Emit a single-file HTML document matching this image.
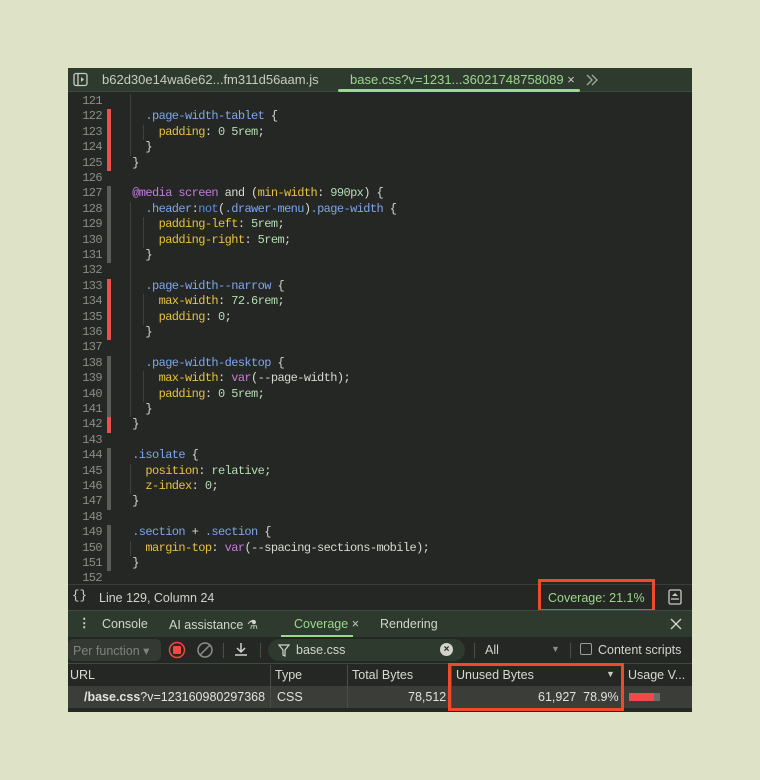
<!DOCTYPE html>
<html><head><meta charset="utf-8"><style>
*{margin:0;padding:0;box-sizing:border-box}
body{width:760px;height:780px;background:#dee3c7;position:relative;overflow:hidden;font-family:"Liberation Sans",sans-serif}
.win{position:absolute;left:68px;top:68px;width:624px;height:644px;background:#242723;overflow:hidden}
.tabs{position:absolute;left:0;top:0;width:624px;height:24px;background:#2e3a2d;border-bottom:1px solid #3d4a3c;font-size:13px;color:#c7ccc2}
.abs{position:absolute;white-space:pre}
.code{position:absolute;left:0;top:25px;width:624px;height:491px;font-family:"Liberation Mono",monospace;font-size:12px;letter-spacing:-0.6px;color:#d6dad2}
.ln{position:absolute;left:0;width:34px;text-align:right;color:#8a8e86;height:15.4px;line-height:15.4px}
.cl{position:absolute;left:51px;height:15.4px;line-height:15.4px;white-space:pre}
.mk{position:absolute;left:39px;width:4px;height:15.4px}
.r{background:#e8524a}.g{background:#5b5e58}
.s{color:#7ea6ec}.p{color:#e7c13f}.v{color:#b5dcb5}.m{color:#c57ae0}.n{color:#5c8ee6}
.guide{position:absolute;width:1px;background:#3e423c}
.status{position:absolute;left:0;top:516px;width:624px;height:26px;border-top:1px solid #3a3e38;font-size:12.5px;color:#d0d4cc}
.dtabs{position:absolute;left:0;top:542px;width:624px;height:27px;background:#2e3a2d;font-size:12.5px;color:#d0d4cc;border-top:1px solid #3d4a3c}
.tool{position:absolute;left:0;top:569px;width:624px;height:27px;background:#242723;font-size:12.5px;color:#d0d4cc;border-bottom:1px solid #3d4a3c}
.th{position:absolute;left:0;top:597px;width:624px;height:21px;background:#242723;font-size:12.5px;color:#d6dad2}
.tr{position:absolute;left:0;top:618px;width:624px;height:22px;background:#3a3d38;font-size:12.5px;color:#e0e4dc}
.col{position:absolute;top:0;bottom:0;width:1px;background:#4a4e47}
.red{position:absolute;border:3px solid #ee4a2b}
</style></head><body>
<div class="win">
 <div class="tabs">
  <svg class="abs" style="left:5px;top:4px" width="15" height="15" viewBox="0 0 15 15"><rect x="1" y="1.5" width="13" height="12" rx="2" fill="none" stroke="#c7ccc2" stroke-width="1.3"/><line x1="5" y1="2" x2="5" y2="13" stroke="#c7ccc2" stroke-width="1.3"/><path d="M8 5l3 2.5-3 2.5z" fill="#c7ccc2"/></svg>
  <div class="abs" style="left:34px;top:4px">b62d30e14wa6e62...fm311d56aam.js</div>
  <div class="abs" style="left:282px;top:4px;color:#9dd68e">base.css?v=1231...36021748758089 <span style="color:#c7ccc2">×</span></div>
  <div class="abs" style="left:270px;top:21px;width:242px;height:3px;background:#9dd68e;border-radius:2px"></div>
  <svg class="abs" style="left:517px;top:6px" width="14" height="12"><path d="M2 1l5 5-5 5M7 1l5 5-5 5" fill="none" stroke="#a0a59b" stroke-width="1.4"/></svg>
 </div>
 <div class="code" id="code"></div>
 <div class="status">
  <div class="abs" style="left:4px;top:4px;font-family:'Liberation Mono',monospace">{}</div>
  <div class="abs" style="left:31px;top:6px">Line 129, Column 24</div>
  <div class="abs" style="left:480px;top:6px;color:#9dd68e">Coverage: 21.1%</div>
  <svg class="abs" style="left:600px;top:4px" width="14" height="16"><rect x="1" y="1" width="12" height="14" rx="1.5" fill="none" stroke="#c7ccc2" stroke-width="1.3"/><path d="M4 7l3-3 3 3z" fill="#c7ccc2"/><line x1="3" y1="10" x2="11" y2="10" stroke="#c7ccc2" stroke-width="1.3"/></svg>
 </div>
 <div class="red" style="left:470px;top:511px;width:117px;height:33px"></div>
 <div class="dtabs">
  <div class="abs" style="left:10px;top:4px;font-weight:bold">⋮</div>
  <div class="abs" style="left:34px;top:6px">Console</div>
  <div class="abs" style="left:101px;top:6px">AI assistance ⚗</div>
  <div class="abs" style="left:226px;top:6px;color:#9dd68e">Coverage <span style="color:#c7ccc2">×</span></div>
  <div class="abs" style="left:213px;top:24px;width:72px;height:2px;background:#9dd68e"></div>
  <div class="abs" style="left:312px;top:6px">Rendering</div>
  <svg class="abs" style="left:602px;top:7px" width="12" height="12"><path d="M1 1l10 10M11 1L1 11" stroke="#d0d4cc" stroke-width="1.4"/></svg>
 </div>
 <div class="tool">
  <div class="abs" style="left:0;top:2px;width:93px;height:22px;background:#353934;border-radius:5px;color:#7f837b;padding:4px 5px">Per function ▾</div>
  <svg class="abs" style="left:100px;top:4px" width="18" height="18"><circle cx="9" cy="9" r="7.5" fill="none" stroke="#ee4a3f" stroke-width="1.5"/><rect x="5" y="5" width="8" height="8" rx="1" fill="#ee4a3f"/></svg>
  <svg class="abs" style="left:128px;top:4px" width="18" height="18"><circle cx="9" cy="9" r="7" fill="none" stroke="#8a8e86" stroke-width="1.5"/><line x1="4" y1="14" x2="14" y2="4" stroke="#8a8e86" stroke-width="1.5"/></svg>
  <div class="abs" style="left:155px;top:6px;width:1px;height:15px;background:#4a4e47"></div>
  <svg class="abs" style="left:165px;top:4px" width="16" height="17"><path d="M8 2v9M4 7l4 4 4-4M2 14h12" fill="none" stroke="#d0d4cc" stroke-width="1.5"/></svg>
  <div class="abs" style="left:192px;top:6px;width:1px;height:15px;background:#4a4e47"></div>
  <div class="abs" style="left:200px;top:2px;width:197px;height:22px;background:#2f3a2e;border-radius:11px"></div>
  <svg class="abs" style="left:210px;top:7px" width="12" height="13"><path d="M1 1h10L7 6v6L5 11V6z" fill="none" stroke="#d0d4cc" stroke-width="1.2"/></svg>
  <div class="abs" style="left:228px;top:6px">base.css</div>
  <div class="abs" style="left:372px;top:6px;width:13px;height:13px;border-radius:50%;background:#d0d4cc;color:#242723;font-size:10px;line-height:13px;text-align:center;font-weight:bold">×</div>
  <div class="abs" style="left:406px;top:6px;width:1px;height:15px;background:#4a4e47"></div>
  <div class="abs" style="left:417px;top:6px">All</div>
  <div class="abs" style="left:483px;top:7px;color:#8a8e86;font-size:9px">▼</div>
  <div class="abs" style="left:502px;top:6px;width:1px;height:15px;background:#4a4e47"></div>
  <div class="abs" style="left:512px;top:6px;width:12px;height:12px;border:1px solid #9a9e96;border-radius:2px"></div>
  <div class="abs" style="left:530px;top:6px">Content scripts</div>
 </div>
 <div class="th">
  <div class="abs" style="left:2px;top:3px">URL</div>
  <div class="abs" style="left:207px;top:3px">Type</div>
  <div class="abs" style="left:284px;top:3px">Total Bytes</div>
  <div class="abs" style="left:388px;top:3px">Unused Bytes</div>
  <div class="abs" style="left:538px;top:4px;font-size:9px;color:#c7ccc2">▼</div>
  <div class="abs" style="left:560px;top:3px">Usage V...</div>
  <div class="col" style="left:202px"></div><div class="col" style="left:279px"></div><div class="col" style="left:383px"></div><div class="col" style="left:555px"></div>
 </div>
 <div class="tr">
  <div class="abs" style="left:16px;top:4px"><b>/base.css</b>?v=123160980297368</div>
  <div class="abs" style="left:207px;top:4px;background:#3a3d38;padding-left:2px">CSS</div>
  <div class="abs" style="left:340px;top:4px">78,512</div>
  <div class="abs" style="left:470px;top:4px">61,927&nbsp;&nbsp;78.9%</div>
  <div class="abs" style="left:561px;top:7px;width:25px;height:8px;background:#ef4a4a"></div>
  <div class="abs" style="left:586px;top:7px;width:6px;height:8px;background:#6a6d67"></div>
  <div class="col" style="left:202px"></div><div class="col" style="left:279px"></div><div class="col" style="left:383px"></div><div class="col" style="left:555px"></div>
 </div>
 <div class="red" style="left:380px;top:595px;width:176px;height:48px"></div>
</div>
<script>
var L=[
[121,'',''],
[122,'r','    <span class="s">.page-width-tablet</span> {'],
[123,'r','      <span class="p">padding</span>: <span class="v">0 5rem</span>;'],
[124,'r','    }'],
[125,'r','  }'],
[126,'',''],
[127,'g','  <span class="m">@media</span> <span class="m">screen</span> and (<span class="p">min-width</span>: <span class="v">990px</span>) {'],
[128,'g','    <span class="s">.header</span>:<span class="n">not</span>(<span class="s">.drawer-menu</span>)<span class="s">.page-width</span> {'],
[129,'g','      <span class="p">padding-left</span>: <span class="v">5rem</span>;'],
[130,'g','      <span class="p">padding-right</span>: <span class="v">5rem</span>;'],
[131,'g','    }'],
[132,'',''],
[133,'r','    <span class="s">.page-width--narrow</span> {'],
[134,'r','      <span class="p">max-width</span>: <span class="v">72.6rem</span>;'],
[135,'r','      <span class="p">padding</span>: <span class="v">0</span>;'],
[136,'r','    }'],
[137,'',''],
[138,'g','    <span class="s">.page-width-desktop</span> {'],
[139,'g','      <span class="p">max-width</span>: <span class="m">var</span>(--page-width);'],
[140,'g','      <span class="p">padding</span>: <span class="v">0 5rem</span>;'],
[141,'g','    }'],
[142,'r','  }'],
[143,'',''],
[144,'g','  <span class="s">.isolate</span> {'],
[145,'g','    <span class="p">position</span>: <span class="v">relative</span>;'],
[146,'g','    <span class="p">z-index</span>: <span class="v">0</span>;'],
[147,'g','  }'],
[148,'',''],
[149,'g','  <span class="s">.section</span> + <span class="s">.section</span> {'],
[150,'g','    <span class="p">margin-top</span>: <span class="m">var</span>(--spacing-sections-mobile);'],
[151,'g','  }'],
[152,'','']];
var h='';
L.forEach(function(l,i){var t=1+i*15.4;
h+='<div class="ln" style="top:'+t+'px">'+l[0]+'</div>';
if(l[1])h+='<div class="mk '+l[1]+'" style="top:'+t+'px"></div>';
h+='<div class="cl" style="top:'+t+'px">'+l[2]+'</div>';});
function g(x,a,b){h+='<div class="guide" style="left:'+x+'px;top:'+(1+(a-121)*15.4)+'px;height:'+((b-a+1)*15.4)+'px"></div>';}
g(62,121,124);g(75,123,123);g(62,128,141);g(75,129,130);g(75,134,135);g(75,139,140);g(62,145,146);g(62,150,150);
document.getElementById('code').innerHTML=h;
</script>
</body></html>
